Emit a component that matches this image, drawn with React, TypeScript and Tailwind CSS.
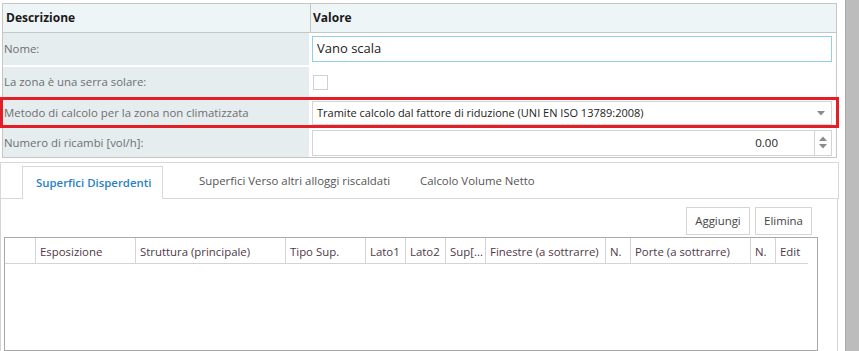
import React from "react";

const F = { fontFamily: '"Open Sans", "Noto Sans", sans-serif' };

function Row({ label, h, mb, children }: { label: string; h: string; mb: string; children?: React.ReactNode }) {
  return (
    <div className={`flex ${h} ${mb}`}>
      <div className="w-[306px] bg-[#e5edef] flex items-center pl-[1px] text-[11.4px] text-[#6f6f6f] whitespace-nowrap">
        {label}
      </div>
      <div className="flex-1 flex items-center pl-[3px] pr-[4px]">{children}</div>
    </div>
  );
}

const cols: { t: string; w: string; last?: boolean }[] = [
  { t: "", w: "w-[31px]" },
  { t: "Esposizione", w: "w-[100px]" },
  { t: "Struttura (principale)", w: "w-[150px]" },
  { t: "Tipo Sup.", w: "w-[80px]" },
  { t: "Lato1", w: "w-[40px]" },
  { t: "Lato2", w: "w-[40px]" },
  { t: "Sup[...", w: "w-[40px]" },
  { t: "Finestre (a sottrarre)", w: "w-[120px]" },
  { t: "N.", w: "w-[25px]" },
  { t: "Porte (a sottrarre)", w: "w-[120px]" },
  { t: "N.", w: "w-[25px]" },
  { t: "Edit", w: "w-[32px]", last: true },
];

export default function App() {
  return (
    <div className="w-[859px] h-[351px] overflow-hidden bg-white flex relative" style={F}>
      <div className="w-[845px] flex flex-col">
        {/* property grid */}
        <div className="ml-[2px] mt-[3px] w-[835px] border border-[#c6c6c6] flex flex-col">
          <div className="flex h-[29px] bg-[#eef5f7] border-b border-[#c6c6c6] text-[12px] font-bold text-[#1a1a1a]">
            <div className="w-[308px] border-r border-[#c6c6c6] flex items-center pl-[3px]">Descrizione</div>
            <div className="flex-1 flex items-center pl-[2px]">Valore</div>
          </div>
          <Row label="Nome:" h="h-[32px]" mb="mb-[2px]">
            <div className="w-full h-[26px] border border-[#8fd0ec] flex items-center pl-[4px] text-[13px] text-[#222]">
              Vano scala
            </div>
          </Row>
          <Row label="La zona è una serra solare:" h="h-[30px]" mb="mb-[2px]">
            <div className="w-[15px] h-[15px] border border-[#d0d0d0] ml-[1px]" />
          </Row>
          <Row label="Metodo di calcolo per la zona non climatizzata" h="h-[28px]" mb="mb-[1px]">
            <div className="w-full h-[24px] border border-[#d4d4d4] flex items-center pl-[4px] pr-[6px] text-[11px] text-[#222]">
              <span className="flex-1 whitespace-nowrap">Tramite calcolo dal fattore di riduzione (UNI EN ISO 13789:2008)</span>
              <svg width="8" height="5" viewBox="0 0 8 5"><path d="M0 0H8L4 4.5Z" fill="#8a8a8a" /></svg>
            </div>
          </Row>
          <Row label="Numero di ricambi [vol/h]:" h="h-[29px]" mb="mb-0">
            <div className="w-full h-[26px] border border-[#d4d4d4] flex items-center text-[11.5px] text-[#222]">
              <span className="flex-1 text-right pr-[36px]">0.00</span>
              <div className="w-[17px] h-full border-l border-[#d4d4d4] flex flex-col items-center justify-center gap-[3px]">
                <svg width="8" height="5" viewBox="0 0 8 5"><path d="M0 5H8L4 0.5Z" fill="#8a8a8a" /></svg>
                <svg width="8" height="5" viewBox="0 0 8 5"><path d="M0 0H8L4 4.5Z" fill="#8a8a8a" /></svg>
              </div>
            </div>
          </Row>
        </div>

        {/* tab strip */}
        <div className="mt-[4px] w-[839px] h-[37px] border-t border-l border-r border-[#d8d8d8] flex items-end text-[11.4px]">
          <div className="w-[21px] h-full border-b border-[#d8d8d8]" />
          <div className="w-[141px] h-[33px] border-l border-r border-t border-[#d8d8d8] flex items-center pl-[13px] font-semibold text-[#2a7fc7] whitespace-nowrap">
            Superfici Disperdenti
          </div>
          <div className="flex-1 h-full border-b border-[#d8d8d8] flex items-center text-[#555] whitespace-nowrap">
            <div className="w-[257px] pl-[36px]">Superfici Verso altri alloggi riscaldati</div>
            <div>Calcolo Volume Netto</div>
          </div>
        </div>

        {/* panel */}
        <div className="w-[838px] flex-1 border-l border-r border-[#d4d4d4] flex flex-col">
          <div className="flex justify-end gap-[5px] pt-[8px] pr-[25px] text-[11.4px] text-[#444]">
            <div className="w-[64px] h-[28px] border border-[#d5d5d5] flex items-center justify-center">Aggiungi</div>
            <div className="w-[57px] h-[28px] border border-[#d5d5d5] flex items-center justify-center">Elimina</div>
          </div>
          <div className="ml-[3px] mt-[2px] w-[814px] flex-1 border border-[#a8a8a8]">
            <div className="flex h-[26px] w-[803px] border-b border-[#d4d4d4] text-[11.4px] text-[#4f3848]">
              {cols.map((c, i) => (
                <div
                  key={i}
                  className={`${c.w} shrink-0 flex items-center pl-[4px] pt-[2px] whitespace-nowrap overflow-hidden ${c.last ? "" : "border-r border-[#d4d4d4]"}`}
                >
                  {c.t}
                </div>
              ))}
            </div>
          </div>
        </div>
      </div>
      {/* scrollbar */}
      <div className="w-[14px] h-full bg-[#bcbcbc] border-l border-[#a9a9a9]" />

      {/* red highlight */}
      <div className="absolute left-0 top-[97px] w-[839px] h-[31px] border-[3px] border-[#e41e26] pointer-events-none" />
    </div>
  );
}
